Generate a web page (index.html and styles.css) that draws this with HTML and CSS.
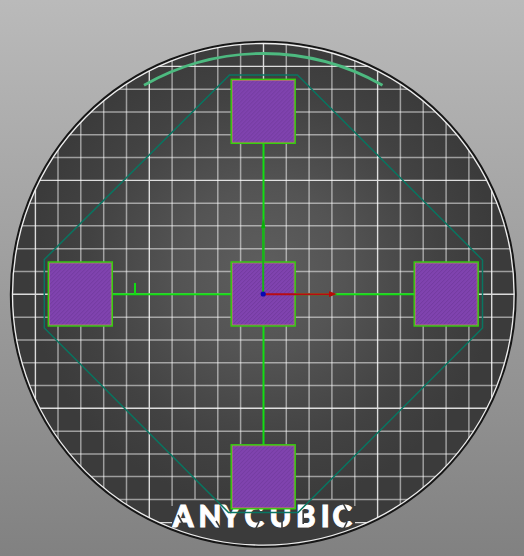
FILE: index.html
```html
<!DOCTYPE html>
<html lang="en">
<head>
<meta charset="utf-8">
<title>Build plate</title>
<link rel="stylesheet" href="styles.css">
</head>
<body>
<svg class="scene" viewBox="0 0 524 556" width="524" height="556">
  <defs>
    <radialGradient id="plate" gradientUnits="userSpaceOnUse" cx="263" cy="270" r="235">
      <stop offset="0" stop-color="#5e5e5e"/>
      <stop offset=".35" stop-color="#545454"/>
      <stop offset=".75" stop-color="#424242"/>
      <stop offset="1" stop-color="#3b3b3b"/>
    </radialGradient>
    <pattern id="hatch" width="4" height="4" patternUnits="userSpaceOnUse">
      <path d="M-1 1L1 -1M0 4L4 0M3 5L5 3" class="hatch"/>
    </pattern>
    <clipPath id="disc"><circle cx="263.3" cy="294.3" r="251"/></clipPath>
    <g id="part">
      <rect x="-32" y="-32" width="64" height="64" class="part-fill"/>
      <rect x="-32" y="-32" width="64" height="64" fill="url(#hatch)"/>
      <rect x="-31" y="-31" width="62" height="62" class="part-inner"/>
      <rect x="-32" y="-32" width="64" height="64" class="part-edge"/>
    </g>
  </defs>
  <circle cx="263.3" cy="294.3" r="252.6" fill="url(#plate)" class="rim"/>
  <g clip-path="url(#disc)">
    <path class="minor" d="M58 40V550M80.8 40V550M103.7 40V550M126.5 40V550M172.1 40V506M195 40V499M217.8 40V499M240.6 40V499M286.3 40V499M309.1 40V499M331.9 40V499M354.8 40V506M400.4 40V550M423.2 40V550M446.1 40V550M468.9 40V550"/>
    <path class="minor" d="M8 89.2H518M8 111.9H518M8 134.7H518M8 157.5H518M8 203.2H518M8 225.7H518M8 248.7H518M8 271.5H518M8 317.2H518M8 339.9H518M8 362.8H518M8 385.6H518M8 431.2H518M8 453.9H518M8 476.6H518M8 499.4H518"/>
    <path class="major" d="M35.4 40V550M149.3 40V550M263.5 40V80M377.6 40V550M491.7 40V550M8 66.4H518M8 180.4H518M8 294.3H518M8 408.3H518M8 522.6H172M355 522.6H518"/>
  </g>
  <circle cx="263.3" cy="294.3" r="250.8" class="ring"/>
  <text y="527.2" x="172.8 198.6 221 244.4 269.5 295.9 320.8 332.4" class="brand">ANYCUBIC</text>
  <path class="cut" d="M178 515L185 528M216 521L221 529M255.5 504L259 511M255.5 529L259 522M282 520V529M303.2 510V524M343.5 504L347 511M343.5 529L347 522"/>
  <path class="axis" d="M263.5 143V445M112 294.3H414M135 283V294"/>
  <use href="#part" x="263.2" y="111.3"/>
  <use href="#part" x="80.3" y="294"/>
  <use href="#part" x="263.2" y="294"/>
  <use href="#part" x="446.2" y="294"/>
  <use href="#part" x="263.2" y="476.8"/>
  <path class="skirt" d="M229.5 75H297.5L482.5 260V328L298 512.5H228.5L44.3 328V259.5Z"/>
  <path class="arc" d="M144 85.2A241 241 0 0 1 263.5 53.5A241 241 0 0 1 382.5 85.2"/>
  <path class="arrow-y" d="M263.2 294V226"/>
  <path class="head-y" d="M263.2 219L265.5 228H261Z"/>
  <path class="arrow-x" d="M263.2 294.2H330"/>
  <path class="head-x" d="M337 294L329 291.3V297Z"/>
  <circle cx="263.2" cy="294" r="2.6" class="origin"/>
</svg>
</body>
</html>
```
FILE: styles.css
```css
body { margin: 0; background: linear-gradient(#bababa, #818181); }
.scene { display: block; }
.rim { stroke: #161616; stroke-width: 1.8; }
.minor, .major { fill: none; stroke: #fff; }
.minor { stroke-opacity: .5; stroke-width: 1.5; }
.major { stroke-opacity: .82; stroke-width: 1.4; }
.ring { fill: none; stroke: #eee; stroke-width: 1.3; }
.brand { font: 900 29.5px Lato, sans-serif; fill: #fff; stroke: #fff; stroke-width: 1; }
.cut { fill: none; stroke: #3d3d3d; stroke-width: 1.6; }
.axis { fill: none; stroke: #12de12; stroke-width: 2; }
.part-fill { fill: #8043af; }
.hatch { stroke: #6b3796; stroke-width: .7; }
.part-inner { fill: none; stroke: #bd8064; stroke-width: .8; }
.part-edge { fill: none; stroke: #35cf0c; stroke-width: 1.4; }
.skirt { fill: none; stroke: #087561; stroke-width: 1.5; }
.arc { fill: none; stroke: #4dba80; stroke-width: 2.8; }
.arrow-y { stroke: #17b517; stroke-width: 2; }
.head-y { fill: #08b008; }
.arrow-x { stroke: #b80b13; stroke-width: 2; }
.head-x { fill: #b80808; }
.origin { fill: #0909b3; }
```
